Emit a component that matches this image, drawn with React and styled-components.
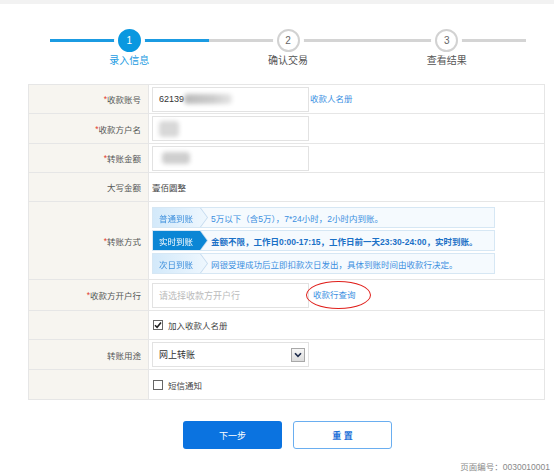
import styled, { createGlobalStyle } from "styled-components";

const GlobalStyle = createGlobalStyle`
  html, body { margin: 0; padding: 0; background: #fff; }
  body { font-family: "Liberation Sans", "Noto Sans CJK SC", sans-serif; }
`;

const Page = styled.div`
  width: 554px;
  height: 473px;
  box-sizing: border-box;
  border-top: 4px solid #f2f2f2;
  background: #fff;
  display: flex;
  flex-direction: column;
  overflow: hidden;
`;

const Stepper = styled.div`
  display: flex;
  margin: 25px 28px 0 50px;
`;

const Step = styled.div`
  flex: 1;
  display: flex;
  flex-direction: column;
  align-items: center;
`;

const Track = styled.div`
  position: relative;
  width: 100%;
  height: 23px;
  display: flex;
  justify-content: center;
  align-items: center;

  &::before {
    content: "";
    position: absolute;
    left: 0;
    right: 0;
    top: 10px;
    height: 3px;
    background: ${(p) => (p.$active ? "#1b9be2" : "#d4d4d4")};
  }
`;

const Circle = styled.div`
  position: relative;
  width: 23px;
  height: 23px;
  box-sizing: border-box;
  border-radius: 50%;
  border: 2px solid ${(p) => (p.$active ? "#0a98e0" : "#d2d2d2")};
  background: ${(p) => (p.$active ? "#0a98e0" : "#fff")};
  color: ${(p) => (p.$active ? "#fff" : "#666")};
  box-shadow: 0 0 0 4px #fff;
  font-size: 10px;
  display: flex;
  align-items: center;
  justify-content: center;
`;

const StepLabel = styled.div`
  margin-top: 1px;
  font-size: 10px;
  line-height: 16px;
  color: ${(p) => (p.$active ? "#1b9be2" : "#555")};
`;

const Table = styled.div`
  margin: 15px 0 0 28px;
  width: 517px;
  border: 1px solid #e6e6e6;
  box-sizing: border-box;
`;

const Row = styled.div`
  display: grid;
  grid-template-columns: 120px 1fr;
  height: ${(p) => p.$h}px;
  box-sizing: border-box;
  border-bottom: ${(p) => (p.$last ? "none" : "1px solid #e6e6e6")};
`;

const Label = styled.div`
  box-sizing: border-box;
  border-right: 1px solid #e6e6e6;
  background: #f7f5f0;
  display: flex;
  align-items: center;
  justify-content: flex-end;
  padding-right: 7px;
  font-size: 8.5px;
  color: #555;
`;

const Star = styled.span`
  color: #e23b2e;
`;

const Cell = styled.div`
  display: flex;
  align-items: center;
  padding-left: 3px;
  font-size: 8.5px;
  color: #444;
`;

const Input = styled.div`
  width: 157px;
  height: 25px;
  box-sizing: border-box;
  border: 1px solid #e2e2e2;
  padding: 0 6px;
  display: flex;
  align-items: center;
  font-size: 9px;
  color: ${(p) => (p.$placeholder ? "#bbb" : "#333")};
  background: #fff;
`;

const Blur = styled.span`
  display: inline-block;
  width: ${(p) => p.$w}px;
  height: ${(p) => p.$hh}px;
  margin-left: ${(p) => p.$ml || 0}px;
  background: ${(p) => p.$c};
  border-radius: 4px;
  filter: blur(2px);
`;

const Link = styled.span`
  position: relative;
  margin-left: ${(p) => p.$ml}px;
  color: #3a8fe2;
  font-size: 8.5px;
  line-height: 12px;
`;

const Ellipse = styled.span`
  position: absolute;
  left: -7px;
  right: -15px;
  top: -8px;
  bottom: -8px;
  border: 1.5px solid #e0201c;
  border-radius: 50%;
`;

const Options = styled.div`
  display: flex;
  flex-direction: column;
  gap: 2px;
`;

const Option = styled.div`
  width: 343px;
  height: 21px;
  box-sizing: border-box;
  border: 1px solid #d6e7f4;
  background: #f5fafe;
  display: flex;
  align-items: center;
`;

const TabWrap = styled.div`
  height: 100%;
  flex-shrink: 0;
  filter: drop-shadow(1px 0 0 #c3daee);
`;

const Tab = styled.div`
  width: 54px;
  height: 100%;
  box-sizing: border-box;
  padding-left: 6px;
  display: flex;
  align-items: center;
  clip-path: polygon(0 0, 47px 0, 54px 50%, 47px 100%, 0 100%);
  background: ${(p) =>
    p.$active ? "#0b86d5" : "linear-gradient(90deg, #d3e9fa, #eef7fe)"};
  color: ${(p) => (p.$active ? "#fff" : "#3d8fdc")};
  font-size: 8.5px;
`;

const Desc = styled.div`
  padding-left: 4px;
  font-size: 8.5px;
  white-space: nowrap;
  color: ${(p) => (p.$active ? "#1a70c6" : "#3b8fe0")};
  font-weight: ${(p) => (p.$active ? 700 : 400)};
`;

const Check = styled.span`
  width: 10px;
  height: 10px;
  box-sizing: border-box;
  border: 1px solid #666;
  background: #fff;
  margin-left: 1px;
  margin-right: 5px;
  display: flex;
  align-items: center;
  justify-content: center;
`;

const Select = styled.div`
  width: 157px;
  height: 25px;
  box-sizing: border-box;
  border: 1px solid #e2e2e2;
  padding: 0 3px 0 6px;
  display: flex;
  align-items: center;
  justify-content: space-between;
  font-size: 9px;
  color: #333;
`;

const DropButton = styled.span`
  width: 14px;
  height: 14px;
  box-sizing: border-box;
  border: 1px solid #a8a8a8;
  background: linear-gradient(#f6f6f6, #dcdcdc);
  display: flex;
  align-items: center;
  justify-content: center;
`;

const Buttons = styled.div`
  display: flex;
  gap: 11px;
  margin: 21px 0 0 183px;
`;

const Button = styled.button`
  width: 99px;
  height: 28px;
  box-sizing: border-box;
  border-radius: 3px;
  font-family: inherit;
  font-size: 9px;
  cursor: pointer;
  border: ${(p) => (p.$primary ? "none" : "1.5px solid #6aaef0")};
  background: ${(p) => (p.$primary ? "#0b73e0" : "#fff")};
  color: ${(p) => (p.$primary ? "#fff" : "#1a6fd8")};
  font-weight: ${(p) => (p.$primary ? 400 : 700)};
`;

const Footer = styled.div`
  margin-top: 11px;
  padding-right: 4px;
  text-align: right;
  font-size: 8.5px;
  color: #888;
`;

const steps = ["录入信息", "确认交易", "查看结果"];

const modes = [
  { tab: "普通到账", desc: "5万以下（含5万），7*24小时，2小时内到账。" },
  {
    tab: "实时到账",
    desc: "金额不限，工作日0:00-17:15，工作日前一天23:30-24:00，实时到账。",
    active: true,
  },
  { tab: "次日到账", desc: "网银受理成功后立即扣款次日发出，具体到账时间由收款行决定。" },
];

const CheckMark = () => (
  <svg width="8" height="8" viewBox="0 0 8 8">
    <path d="M1 4.2 L3.1 6.3 L7 1.5" fill="none" stroke="#222" strokeWidth="1.6" />
  </svg>
);

export default function App() {
  return (
    <>
      <GlobalStyle />
      <Page>
        <Stepper>
          {steps.map((s, i) => (
            <Step key={s}>
              <Track $active={i === 0}>
                <Circle $active={i === 0}>{i + 1}</Circle>
              </Track>
              <StepLabel $active={i === 0}>{s}</StepLabel>
            </Step>
          ))}
        </Stepper>

        <Table>
          <Row $h={29}>
            <Label><Star>*</Star>收款账号</Label>
            <Cell>
              <Input>
                62139
                <Blur $w={48} $hh={10} $c="linear-gradient(90deg,#bbb,#ccc 60%,#e6e6e6)" />
              </Input>
              <Link $ml={1}>收款人名册</Link>
            </Cell>
          </Row>
          <Row $h={30}>
            <Label><Star>*</Star>收款方户名</Label>
            <Cell>
              <Input>
                <Blur $w={20} $hh={16} $c="#d8d8d8" />
              </Input>
            </Cell>
          </Row>
          <Row $h={29}>
            <Label><Star>*</Star>转账金额</Label>
            <Cell>
              <Input>
                <Blur $w={28} $hh={12} $ml={3} $c="#cfcfcf" />
              </Input>
            </Cell>
          </Row>
          <Row $h={29}>
            <Label>大写金额</Label>
            <Cell>壹佰圆整</Cell>
          </Row>
          <Row $h={78}>
            <Label><Star>*</Star>转账方式</Label>
            <Cell>
              <Options>
                {modes.map((m) => (
                  <Option key={m.tab}>
                    <TabWrap>
                      <Tab $active={m.active}>{m.tab}</Tab>
                    </TabWrap>
                    <Desc $active={m.active}>{m.desc}</Desc>
                  </Option>
                ))}
              </Options>
            </Cell>
          </Row>
          <Row $h={31}>
            <Label><Star>*</Star>收款方开户行</Label>
            <Cell>
              <Input $placeholder>请选择收款方开户行</Input>
              <Link $ml={4}>
                收款行查询
                <Ellipse />
              </Link>
            </Cell>
          </Row>
          <Row $h={29}>
            <Label />
            <Cell>
              <Check><CheckMark /></Check>
              加入收款人名册
            </Cell>
          </Row>
          <Row $h={30}>
            <Label>转账用途</Label>
            <Cell>
              <Select>
                网上转账
                <DropButton>
                  <svg width="8" height="6" viewBox="0 0 8 6">
                    <path d="M1 1.2 L4 4.4 L7 1.2" fill="none" stroke="#1c2a4a" strokeWidth="1.6" />
                  </svg>
                </DropButton>
              </Select>
            </Cell>
          </Row>
          <Row $h={29} $last>
            <Label />
            <Cell>
              <Check />
              短信通知
            </Cell>
          </Row>
        </Table>

        <Buttons>
          <Button $primary>下一步</Button>
          <Button>重 置</Button>
        </Buttons>
        <Footer>页面编号：0030010001</Footer>
      </Page>
    </>
  );
}
